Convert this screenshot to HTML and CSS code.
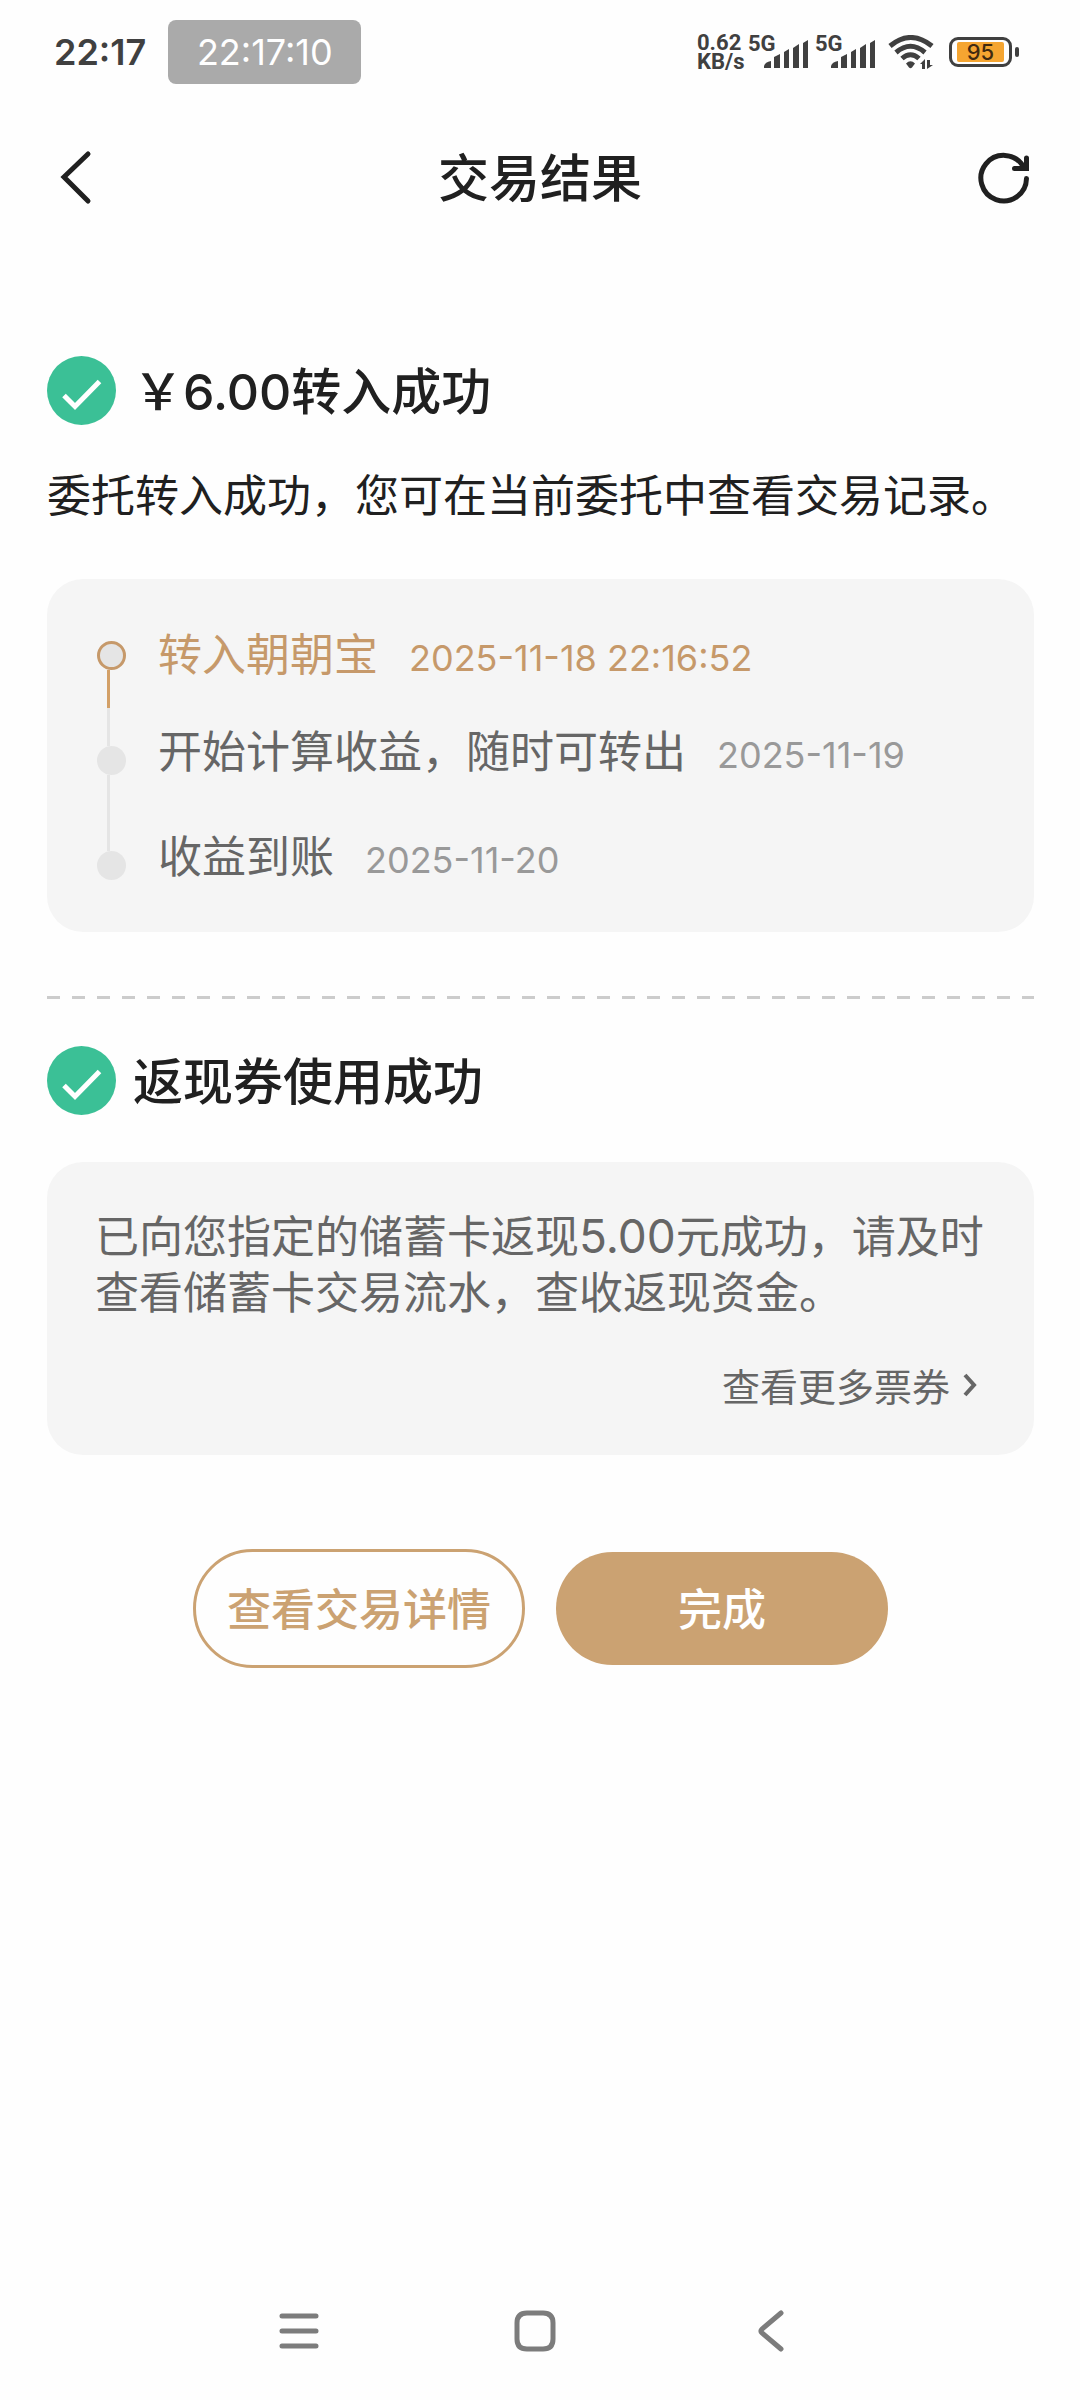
FILE: index.html
```html
<!DOCTYPE html>
<html lang="zh-CN">
<head>
<meta charset="utf-8">
<meta name="viewport" content="width=device-width, initial-scale=1">
<title>交易结果</title>
<link rel="stylesheet" href="styles.css">
</head>
<body>
<div class="status">
  <span class="clock">22:17</span>
  <span class="stamp">22:17:10</span>
  <div class="indicators">
    <div class="speed"><span>0.62</span><span>KB/s</span></div>
    <div class="signal">
      <span class="net">5G</span>
      <svg class="bars" viewBox="0 0 44 28" aria-hidden="true"><path d="M0 28v-2q1-4 7-5v7zM10 28V17l6-3v14zM20 28V12l5-3v19zM29 28V8l6-4v24zM39 28V3l5-3v28z"/></svg>
    </div>
    <div class="signal">
      <span class="net">5G</span>
      <svg class="bars" viewBox="0 0 44 28" aria-hidden="true"><path d="M0 28v-2q1-4 7-5v7zM10 28V17l6-3v14zM20 28V12l5-3v19zM29 28V8l6-4v24zM39 28V3l5-3v28z"/></svg>
    </div>
    <svg class="wifi" viewBox="0 0 46 34" aria-hidden="true">
      <path class="arc" d="M2 11Q22.500-6 44 11M8 17.500Q22.500 5 37 17.500M14 23.500Q22.500 16 31 23.500"/>
      <path d="M18 28.500Q22.500 24 27 28.500L24 32.500Q22.500 34 21 32.500zM32 29l5-5v10h-3v-5zM39 25h3v5h3l-6 4z"/>
    </svg>
    <div class="battery"><span class="level">95</span></div>
  </div>
</div>

<header class="bar">
  <button class="icon-btn" type="button" aria-label="返回">
    <svg viewBox="0 0 60 60"><path d="M46 6 22 29l24 24"/></svg>
  </button>
  <h1>交易结果</h1>
  <button class="icon-btn" type="button" aria-label="刷新">
    <svg viewBox="0 0 60 60"><path d="M48.500 30.500A22.800 22.800 0 1 1 45 18M36.500 20.500H48.500V10"/></svg>
  </button>
</header>

<main>
  <h2 class="result">
    <svg class="tick" viewBox="0 0 69 69" aria-hidden="true"><circle cx="34.500" cy="34.500" r="34.500"/><path d="M17 39.500 28 50.500 52.500 25.500"/></svg>
    <span>￥<span class="num">6.00</span>转入成功</span>
  </h2>
  <p class="desc">委托转入成功，您可在当前委托中查看交易记录。</p>

  <ol class="card steps">
    <li class="done">
      <span class="marker"><i class="line"></i><i class="dot"></i><i class="line"></i></span>
      <span class="step">转入朝朝宝 <time>2025-11-18 22:16:52</time></span>
    </li>
    <li>
      <span class="marker"><i class="line"></i><i class="dot"></i><i class="line"></i></span>
      <span class="step">开始计算收益，随时可转出 <time>2025-11-19</time></span>
    </li>
    <li>
      <span class="marker"><i class="line"></i><i class="dot"></i><i class="line"></i></span>
      <span class="step">收益到账 <time>2025-11-20</time></span>
    </li>
  </ol>

  <hr>

  <h2 class="result">
    <svg class="tick" viewBox="0 0 69 69" aria-hidden="true"><circle cx="34.500" cy="34.500" r="34.500"/><path d="M17 39.500 28 50.500 52.500 25.500"/></svg>
    <span>返现券使用成功</span>
  </h2>
  <section class="card coupon">
    <p>已向您指定的储蓄卡返现<span class="num">5.00</span>元成功，请及时查看储蓄卡交易流水，查收返现资金。</p>
    <a href="#">查看更多票券<svg viewBox="0 0 24 24" aria-hidden="true"><path d="M3 2 12 12 3 22"/></svg></a>
  </section>

  <div class="actions">
    <button class="btn outline" type="button">查看交易详情</button>
    <button class="btn filled" type="button">完成</button>
  </div>
</main>

<nav class="system" aria-label="系统导航">
  <button type="button" aria-label="最近任务"><svg viewBox="0 0 46 46"><path d="M6 8h34M6 23h34M6 38h34"/></svg></button>
  <button type="button" aria-label="主屏幕"><svg viewBox="0 0 46 46"><path d="M15 5H31Q41 5 41 15V31Q41 41 31 41H15Q5 41 5 31V15Q5 5 15 5z"/></svg></button>
  <button type="button" aria-label="返回"><svg viewBox="0 0 46 46"><path d="M33 5 14 21Q12 23 14 25L33 41"/></svg></button>
</nav>
</body>
</html>
```

FILE: styles.css
```css
* { box-sizing: border-box; }

body {
  margin: 0;
  min-height: 100vh;
  display: flex;
  flex-direction: column;
  background: #fefefe;
  color: #202020;
  font-family: "Noto Sans CJK SC", "Noto Sans", sans-serif;
  font-size: 44px;
}

h1, h2, p, ol { margin: 0; padding: 0; }

button {
  padding: 0;
  border: 0;
  background: none;
  color: inherit;
  font: inherit;
}

svg { display: block; flex: none; }

/* Status bar */
.status {
  display: flex;
  align-items: center;
  height: 104px;
  padding: 0 62px 0 54px;
  color: #404040;
  font-family: Inter, sans-serif;
  font-size: 36px;
  line-height: 64px;
}

.clock { font-weight: 600; }

.stamp {
  width: 193px;
  margin-left: 22px;
  border-radius: 8px;
  background: #aaa;
  color: #fff;
  text-align: center;
}

.indicators {
  display: flex;
  align-items: center;
  margin-left: auto;
  font-family: Roboto, sans-serif;
  font-weight: 700;
}

.speed {
  display: flex;
  flex-direction: column;
  width: 51px;
  font-size: 22px;
  line-height: 19px;
}

.signal { display: flex; align-items: flex-end; height: 32px; margin-right: 7px; }
.net { align-self: flex-start; width: 16px; font-size: 22px; line-height: 16px; }
.bars { width: 44px; height: 28px; fill: #404040; }
.wifi { width: 46px; height: 34px; margin-left: 6px; fill: #404040; }
.arc { fill: none; stroke: #404040; stroke-width: 5; }

.battery {
  position: relative;
  width: 63px;
  height: 30px;
  margin: 0 6px 0 15px;
  padding: 2px 5px;
  border: 3px solid #404040;
  border-radius: 9px;
}

.battery::after {
  content: "";
  position: absolute;
  top: 7px;
  right: -10px;
  width: 4px;
  height: 10px;
  border-radius: 2px;
  background: #404040;
}

.level {
  display: block;
  border-radius: 2px;
  background: #f5a531;
  color: #402a10;
  font-family: Inter, sans-serif;
  font-weight: 500;
  font-size: 22px;
  line-height: 20px;
  text-align: center;
}

/* Title bar */
.bar {
  display: flex;
  align-items: center;
  justify-content: space-between;
  height: 148px;
  padding: 0 42px;
}

.icon-btn svg {
  width: 60px;
  height: 60px;
  fill: none;
  stroke: #202020;
  stroke-width: 5;
  stroke-linecap: round;
  stroke-linejoin: miter;
}

h1 {
  padding-bottom: 6px;
  font-size: 51px;
  font-weight: 500;
  line-height: 72px;
}

/* Content */
main { padding: 104px 46px 0 47px; }

.result {
  display: flex;
  align-items: center;
  gap: 17px;
  height: 69px;
  font-size: 50px;
  font-weight: 500;
  line-height: 64px;
}

.result > span { padding-bottom: 6px; }
.num { font-family: Inter, sans-serif; font-size: 46px; line-height: 1; }
.result .num { font-size: 50px; }
.tick { width: 69px; height: 69px; fill: #3bc096; }
.tick path { fill: none; stroke: #fff; stroke-width: 5; }

.desc { margin-top: 38px; line-height: 60px; }

.card {
  border-radius: 36px;
  background: #f5f5f5;
  color: #666;
}

.steps {
  margin-top: 56px;
  padding: 24px 50px 14px;
  list-style: none;
}

.steps li { display: flex; gap: 32px; height: 105px; }
.marker { display: flex; flex-direction: column; width: 29px; }
.line { flex: 1; width: 3px; margin-left: 10px; background: #e5e5e5; }
.dot { height: 29px; border-radius: 50%; background: #e5e5e5; }
.steps li:first-child .line:first-child,
.steps li:last-child .line:last-child { background: none; }

.step {
  display: flex;
  align-items: baseline;
  gap: 31px;
  align-self: center;
  padding-bottom: 18px;
  line-height: 60px;
}

time { color: #999; font-family: Inter, sans-serif; font-size: 36px; }

.done, .done time { color: #c6996a; }
.done .step { padding-bottom: 2px; }
.done .dot { border: 3px solid #c6996a; }
.done .line { background: #d3a067; }

hr {
  height: 3px;
  margin: 64px 0 47px;
  border: 0;
  background: repeating-linear-gradient(90deg, #ccc 0 13px, transparent 13px 25px);
}

.coupon { margin-top: 47px; padding: 44px 48px 42px; }
.coupon p { line-height: 56px; }

.coupon a {
  display: flex;
  align-items: center;
  justify-content: flex-end;
  gap: 12px;
  margin-top: 39px;
  color: #666;
  font-size: 38px;
  line-height: 56px;
  text-decoration: none;
}

.coupon svg { width: 24px; height: 24px; fill: none; stroke: #666; stroke-width: 4; }

.actions {
  display: flex;
  align-items: center;
  justify-content: center;
  gap: 31px;
  margin-top: 94px;
}

.btn {
  width: 332px;
  height: 113px;
  padding-bottom: 4px;
  border-radius: 60px;
  font-weight: 500;
  white-space: nowrap;
}

.outline { height: 119px; border: 3px solid #cba272; color: #cba272; }
.filled { background: #cba272; color: #fff; }

/* System navigation */
.system {
  display: flex;
  align-items: center;
  justify-content: center;
  gap: 156px;
  height: 138px;
  margin-top: auto;
  padding-right: 10px;
}

.system button { display: grid; place-items: center; width: 80px; height: 80px; }

.system svg {
  width: 46px;
  height: 46px;
  fill: none;
  stroke: #7c7c7c;
  stroke-width: 5;
  stroke-linecap: round;
}
```
